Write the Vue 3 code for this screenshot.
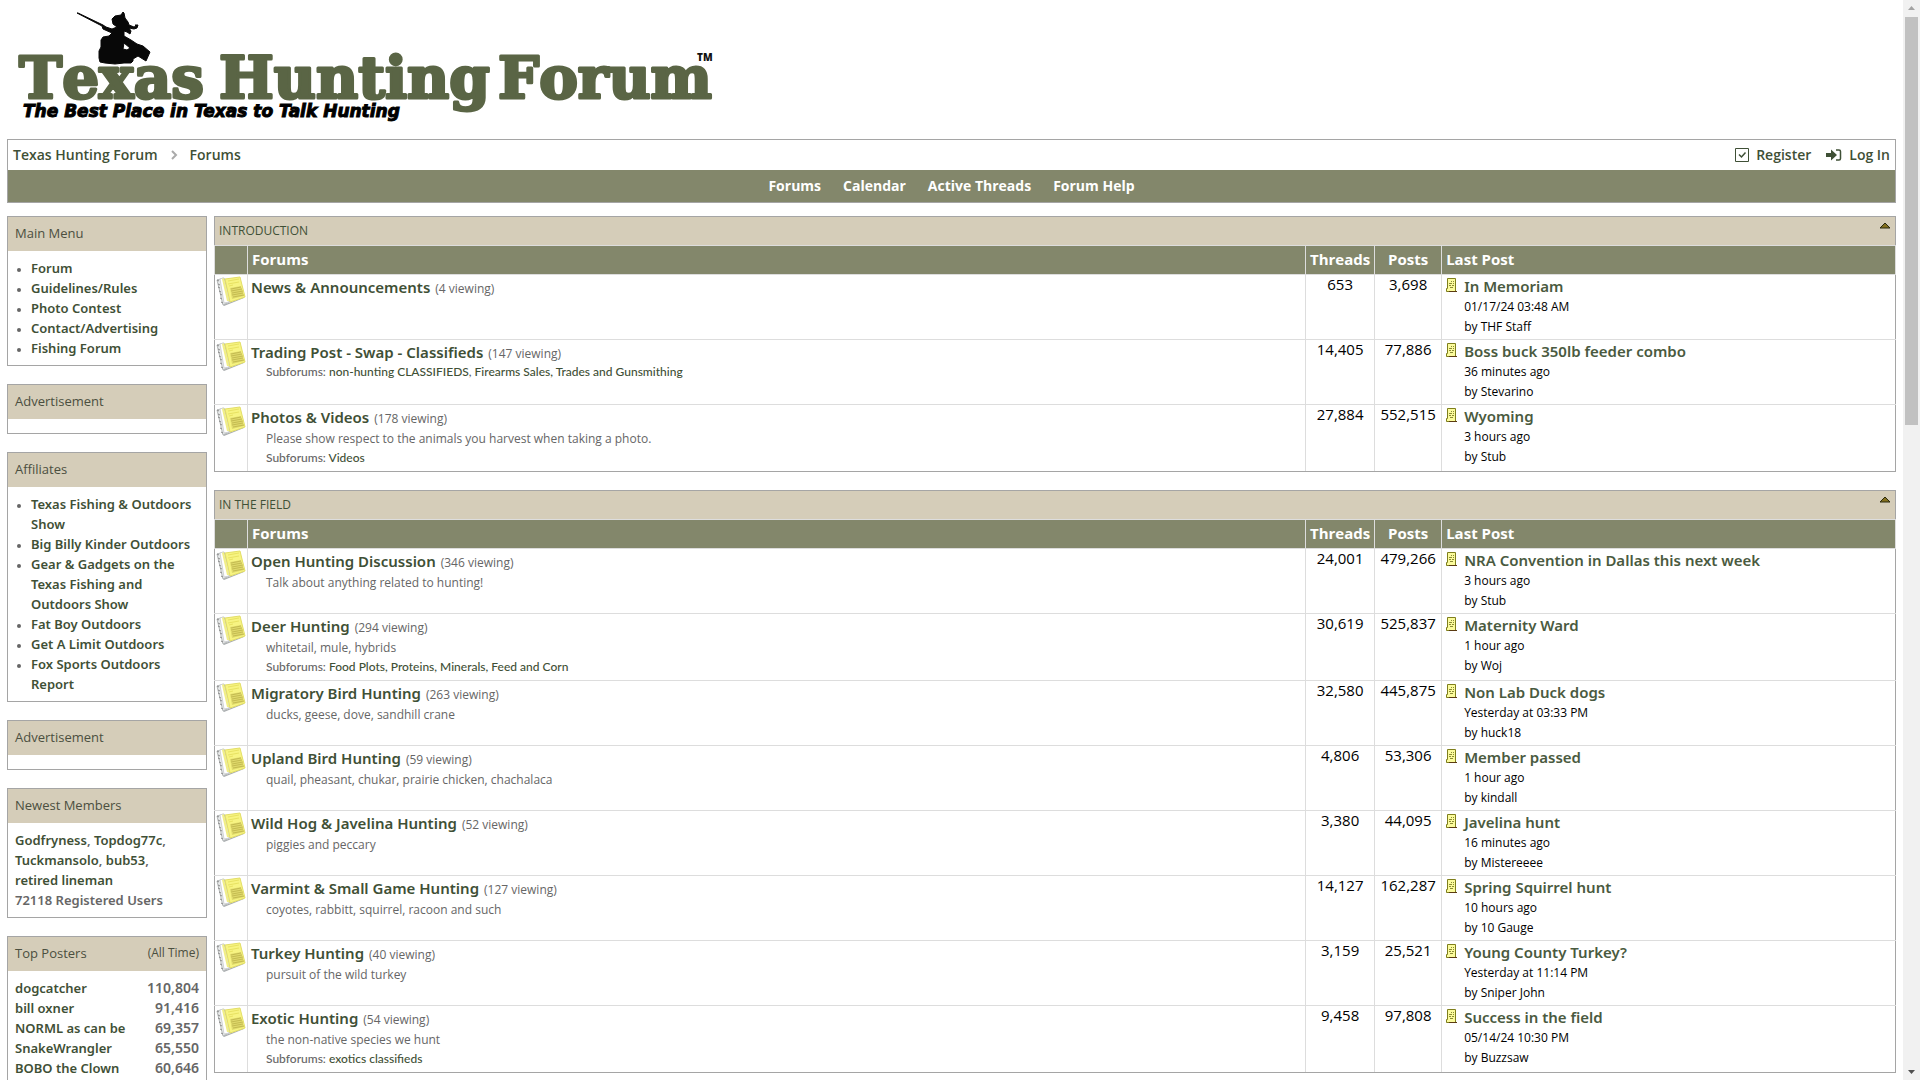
<script setup>
const navLinks = ['Forums', 'Calendar', 'Active Threads', 'Forum Help']
const mainMenu = ['Forum', 'Guidelines/Rules', 'Photo Contest', 'Contact/Advertising', 'Fishing Forum']
const affiliates = [
  'Texas Fishing & Outdoors Show',
  'Big Billy Kinder Outdoors',
  'Gear & Gadgets on the Texas Fishing and Outdoors Show',
  'Fat Boy Outdoors',
  'Get A Limit Outdoors',
  'Fox Sports Outdoors Report'
]
const newest = ['Godfryness', 'Topdog77c', 'Tuckmansolo', 'bub53', 'retired lineman']
const posters = [
  ['dogcatcher', '110,804'],
  ['bill oxner', '91,416'],
  ['NORML as can be', '69,357'],
  ['SnakeWrangler', '65,550'],
  ['BOBO the Clown', '60,646']
]
const categories = [
  {
    name: 'INTRODUCTION',
    forums: [
      { name: 'News & Announcements', viewing: 4, threads: '653', posts: '3,698', last: 'In Memoriam', date: '01/17/24', time: '03:48 AM', by: 'THF Staff' },
      { name: 'Trading Post - Swap - Classifieds', viewing: 147, subs: ['non-hunting CLASSIFIEDS', 'Firearms Sales, Trades and Gunsmithing'], threads: '14,405', posts: '77,886', last: 'Boss buck 350lb feeder combo', date: '36 minutes ago', by: 'Stevarino' },
      { name: 'Photos & Videos', viewing: 178, desc: 'Please show respect to the animals you harvest when taking a photo.', subs: ['Videos'], threads: '27,884', posts: '552,515', last: 'Wyoming', date: '3 hours ago', by: 'Stub' }
    ]
  },
  {
    name: 'IN THE FIELD',
    forums: [
      { name: 'Open Hunting Discussion', viewing: 346, desc: 'Talk about anything related to hunting!', threads: '24,001', posts: '479,266', last: 'NRA Convention in Dallas this next week', date: '3 hours ago', by: 'Stub' },
      { name: 'Deer Hunting', viewing: 294, desc: 'whitetail, mule, hybrids', subs: ['Food Plots, Proteins, Minerals, Feed and Corn'], threads: '30,619', posts: '525,837', last: 'Maternity Ward', date: '1 hour ago', by: 'Woj' },
      { name: 'Migratory Bird Hunting', viewing: 263, desc: 'ducks, geese, dove, sandhill crane', threads: '32,580', posts: '445,875', last: 'Non Lab Duck dogs', date: 'Yesterday at', time: '03:33 PM', by: 'huck18' },
      { name: 'Upland Bird Hunting', viewing: 59, desc: 'quail, pheasant, chukar, prairie chicken, chachalaca', threads: '4,806', posts: '53,306', last: 'Member passed', date: '1 hour ago', by: 'kindall' },
      { name: 'Wild Hog & Javelina Hunting', viewing: 52, desc: 'piggies and peccary', threads: '3,380', posts: '44,095', last: 'Javelina hunt', date: '16 minutes ago', by: 'Mistereeee' },
      { name: 'Varmint & Small Game Hunting', viewing: 127, desc: 'coyotes, rabbitt, squirrel, racoon and such', threads: '14,127', posts: '162,287', last: 'Spring Squirrel hunt', date: '10 hours ago', by: '10 Gauge' },
      { name: 'Turkey Hunting', viewing: 40, desc: 'pursuit of the wild turkey', threads: '3,159', posts: '25,521', last: 'Young County Turkey?', date: 'Yesterday at', time: '11:14 PM', by: 'Sniper John' },
      { name: 'Exotic Hunting', viewing: 54, desc: 'the non-native species we hunt', subs: ['exotics classifieds'], threads: '9,458', posts: '97,808', last: 'Success in the field', date: '05/14/24', time: '10:30 PM', by: 'Buzzsaw' }
    ]
  }
]
</script>

<template>
  <div class="page">
    <header>
      <a href="#" class="logo">
        <svg width="720" height="132" viewBox="7 7 720 132" role="img" aria-label="Texas Hunting Forum">
          <g class="wordmark">
            <text x="19" y="98">Texas</text>
            <text x="219" y="98">Hunting</text>
            <text x="498" y="98">Forum</text>
          </g>
          <text class="tm" x="697" y="61">TM</text>
          <text class="tagline" x="23" y="117">The Best Place in Texas to Talk Hunting</text>
          <path
            fill="#080808"
            stroke="#080808"
            fill-rule="evenodd"
            d="M77 13L78 13L103 25L106 27L112 29L117 27L113 24L112 19L115 16L121 15L123 12L124 13L125 18L128 22L129 25L134 27L136 26L135 25L138 25L137 28L134 29L129 28L131 31L130 34L127 32L124 31L124 36L131 40L137 44L143 46L150 52L146 61L138 56L133 59L133 61L131 63L124 63L115 64L105 63L100 62L99 58L99 51L101 47L101 40L103 37L109 36L112 33L103 29L102 26ZM124 43L123 49L127 50L130 48Z" />
        </svg>
      </a>
      <div class="topbar">
        <div class="crumbs">
          <nav class="trail" aria-label="Breadcrumb">
            <a href="#">Texas Hunting Forum</a>
            <svg width="8" height="10" viewBox="0 0 8 10"><path d="M2 1l4 4-4 4" fill="none" stroke="#aaa" stroke-width="2" /></svg>
            <a href="#">Forums</a>
          </nav>
          <div class="account">
            <a href="#">
              <svg width="14" height="14" viewBox="0 0 14 14" fill="none" stroke="currentColor"><path d="M.5.5h13v13H.5z" /><path d="M4 6.500l2.500 2.500 4-4.500" stroke-width="1.500" /></svg>Register</a>
            <a href="#">
              <svg width="16" height="14" viewBox="0 0 16 14"><path d="M0 5h5V1.500L11 7l-6 5.500V9H0z" fill="currentColor" /><path d="M10 2h3q1.500 0 1.500 1.500v7q0 1.500-1.500 1.500h-3" fill="none" stroke="currentColor" stroke-width="1.500" /></svg>Log In</a>
          </div>
        </div>
        <nav class="nav" aria-label="Main">
          <a v-for="l in navLinks" :key="l" href="#">{{ l }}</a>
        </nav>
      </div>
    </header>

    <div class="columns">
      <aside>
        <section class="box">
          <h2>Main Menu</h2>
          <ul><li v-for="m in mainMenu" :key="m"><a href="#">{{ m }}</a></li></ul>
        </section>
        <section class="box">
          <h2>Advertisement</h2>
          <div class="body"></div>
        </section>
        <section class="box">
          <h2>Affiliates</h2>
          <ul><li v-for="m in affiliates" :key="m"><a href="#">{{ m }}</a></li></ul>
        </section>
        <section class="box">
          <h2>Advertisement</h2>
          <div class="body"></div>
        </section>
        <section class="box">
          <h2>Newest Members</h2>
          <div class="body">
            <div><template v-for="(n, i) in newest" :key="n"><a href="#" class="member">{{ n }}</a><template v-if="i &lt; newest.length - 1">, </template></template></div>
            72118 Registered Users
          </div>
        </section>
        <section class="box">
          <h2>Top Posters <small>(All Time)</small></h2>
          <table class="posters">
            <tbody>
              <tr v-for="p in posters" :key="p[0]"><td><a href="#">{{ p[0] }}</a></td><td>{{ p[1] }}</td></tr>
            </tbody>
          </table>
        </section>
      </aside>

      <main>
        <section v-for="c in categories" :key="c.name" class="category">
          <div class="cat-head">
            <a href="#">{{ c.name }}</a>
            <button type="button" aria-label="Collapse">
              <svg width="12" height="7" viewBox="0 0 12 7"><path d="M1 6l5-5 5 5z" fill="#83701f" stroke="#2b2a10" /></svg>
            </button>
          </div>
          <table class="forums">
            <thead>
              <tr>
                <th class="c-icon"></th>
                <th>Forums</th>
                <th class="c-threads">Threads</th>
                <th class="c-posts">Posts</th>
                <th class="c-last">Last Post</th>
              </tr>
            </thead>
            <tbody>
              <tr v-for="f in c.forums" :key="f.name" :class="{ tall: f.desc &amp;&amp; f.subs }">
                <td class="icon">
                  <svg width="30" height="30" viewBox="0 0 30 30">
                    <path d="M1 4l7-2 7 23-8 4z" fill="#e8eaea" stroke="#b5b8b8" />
                    <path d="M1 4l2 1M2 8l2 1M2 11l2 1M3 15l2 1M4 18l2 1M4 22l2 1M5 26l2 1" stroke="#8b8b8b" />
                    <path d="M4 3l3-1 6 24-5 1z" fill="#fff" stroke="#cfd2d3" />
                    <path d="M7 29l21-8v1L8 30z" fill="#a9adaf" />
                    <path d="M6 3l2-1 5 23-2 0z" fill="#f2ef86" />
                    <path d="M9 3l15-2 5 20-15 5z" fill="#f7f482" stroke="#e3de66" />
                    <path d="M12 5l11-2M12 8l11-2M13 10l4-1" stroke="#e8e262" />
                    <path d="M14 12l11-2 3 10-12 3z" fill="#e0da6c" />
                    <path d="M15 13l10-2M15 15l11-2M16 17l11-2M16 19l11-2M17 21l11-2" stroke="#c4bb50" />
                  </svg>
                </td>
                <td class="forum">
                  <div class="title"><a href="#">{{ f.name }}</a><span>({{ f.viewing }} viewing)</span></div>
                  <div v-if="f.desc" class="desc">{{ f.desc }}</div>
                  <div v-if="f.subs" class="subs">Subforums: <template v-for="(s, i) in f.subs" :key="s"><template v-if="i">, </template><a href="#">{{ s }}</a></template></div>
                </td>
                <td class="num">{{ f.threads }}</td>
                <td class="num">{{ f.posts }}</td>
                <td class="last">
                  <div class="post">
                    <svg width="11" height="14" viewBox="0 0 11 14">
                      <path d="M1.500.5h8v13h-9v-3h1z" fill="#fbfb9c" stroke="#7f7f1c" />
                      <path d="M5 3.500h1M7 3.500h1M3 5.500h3M7 5.500h1M3 7.500h2M6 7.500h2M4 9.500h3" stroke="#8a8a35" />
                      <path d="M3 13.500h8" stroke="#5a3a12" />
                    </svg>
                    <div>
                      <a href="#" class="post-title">{{ f.last }}</a>
                      <div>{{ f.date }}<template v-if="f.time">&nbsp;<b>{{ f.time }}</b></template></div>
                      <div>by <b>{{ f.by }}</b></div>
                    </div>
                  </div>
                </td>
              </tr>
            </tbody>
          </table>
        </section>
      </main>
    </div>

    <div class="scrollbar" aria-hidden="true">
      <svg width="17" height="17" viewBox="0 0 17 17"><path d="M5 10l3.500-4 3.500 4z" fill="#a3a3a3" /></svg>
      <div class="track"><div class="thumb"></div></div>
      <svg width="17" height="17" viewBox="0 0 17 17"><path d="M5 7l3.500 4 3.500-4z" fill="#505050" /></svg>
    </div>
  </div>
</template>

<style>
body { background: #fff; }
</style>

<style scoped>
.page {
  box-sizing: border-box;
  height: 100vh;
  overflow: hidden;
  padding: 7px 24px 0 7px;
  font: 600 13px/20px "Trebuchet MS", "Open Sans", sans-serif;
  color: #666;
}
a { color: #3f5036; text-decoration: none; }
.logo { display: block; height: 132px; }
.logo svg { display: block; }
.wordmark { font: bold 58px "DejaVu Serif", serif; font-kerning: none; fill: #5a6545; stroke: #5a6545; stroke-width: 3; stroke-linejoin: round; }
.tm { font: 800 10px "Open Sans", sans-serif; fill: #111; }
.tagline { font: italic bold 17px "DejaVu Sans", sans-serif; fill: #000; stroke: #000; stroke-width: 1; }
.topbar { border: 1px solid #a5a5a5; }
.crumbs { display: flex; justify-content: space-between; align-items: center; height: 30px; padding: 0 5px; font-size: 14px; }
.trail { display: flex; align-items: center; gap: 12px; }
.account { display: flex; gap: 15px; }
.account a { display: flex; align-items: center; gap: 7px; }
.nav { display: flex; justify-content: center; align-items: center; gap: 22px; height: 32px; background: #83876b; font-size: 14px; font-weight: 700; }
.nav a { color: #fff; }

.columns { display: flex; align-items: flex-start; gap: 7px; margin-top: 13px; }
aside { flex: 0 0 200px; font-family: "Trebuchet MS", "Noto Sans", sans-serif; }
.box { box-sizing: border-box; margin-bottom: 18px; border: 1px solid #a5a5a5; }
.box h2 { display: flex; justify-content: space-between; margin: 0; padding: 6px 7px 8px; background: #d5cdb9; color: #4b4f40; font-family: "Trebuchet MS", "Open Sans", sans-serif; font-size: 13px; font-weight: 500; }
.box h2 small { font-size: 12px; }
.box ul { margin: 0; padding: 7px 7px 7px 23px; }
.box li::marker { font-size: 10px; }
.body { padding: 7px; }
.member { white-space: nowrap; }
.posters { width: 100%; padding: 7px 7px 27px; border-spacing: 0; }
.posters td { padding: 0; }
.posters td:last-child { text-align: right; font-size: 14px; }

main { flex: 1; min-width: 0; }
.category { margin-bottom: 18px; }
.cat-head { display: flex; justify-content: space-between; align-items: flex-start; height: 28px; padding: 0 4px; border: 1px solid #a5a5a5; border-bottom: 0; background: #d5cdb9; font-size: 12px; font-weight: 500; line-height: 27px; }
.cat-head button { display: flex; padding: 5px 0; border: 0; background: none; }
.forums { width: 100%; table-layout: fixed; border-collapse: collapse; border: 1px solid #a5a5a5; color: #000; }
.forums th, .forums td { padding: 0 4px; border: 1px solid #ddd; text-align: left; vertical-align: top; }
.forums td:last-child { border-right-color: #a5a5a5; }
.forums td:first-child { border-left-color: #a5a5a5; }
.forums tbody tr:last-child td { border-bottom-color: #a5a5a5; }
.forums th { height: 28px; background: #83876b; color: #fff; font-size: 15px; font-weight: 700; line-height: 26px; }
.forums tbody tr { height: 65px; }
.forums tbody tr.tall { height: 67px; }
.forums .c-icon { width: 24px; }
.forums .c-threads { width: 68px; padding: 0; text-align: center; }
.forums .c-posts { width: 66px; padding: 0; text-align: center; }
.forums .c-last { width: 27%; box-sizing: border-box; }
.forums .icon { padding: 1px; }
.icon svg, .post svg { display: block; flex: none; }
.post svg { margin-top: 1px; }
.forums .forum { padding: 2px 3px 0; color: #666; font-size: 12px; font-weight: 500; }
.title { display: flex; gap: 5px; align-items: baseline; height: 21px; }
.title a { font-family: "Trebuchet MS", "Noto Sans", sans-serif; font-size: 15px; font-weight: 600; }
.desc { margin-left: 15px; line-height: 21px; }
.subs { margin-left: 15px; font-family: "Trebuchet MS", "Lato", sans-serif; font-size: 12px; font-weight: 500; line-height: 18px; }
.forums .num { padding: 0; text-align: center; font-size: 15px; font-weight: 400; line-height: 18px; }
.forums .last { padding: 2px 4px 0; font-size: 12px; font-weight: 500; }
.post { display: flex; gap: 7px; }
.post b { font-weight: 500; }
.post-title { display: block; height: 20px; font-family: "Trebuchet MS", "Noto Sans", sans-serif; font-size: 15px; font-weight: 600; line-height: 18px; color: #4a5a40; }

.scrollbar { position: fixed; top: 0; right: 0; bottom: 0; width: 17px; display: flex; flex-direction: column; background: #f1f1f1; }
.scrollbar svg { display: block; flex: none; }
.track { flex: 1; padding: 0 2px; }
.thumb { height: 39%; background: #c1c1c1; }
</style>
